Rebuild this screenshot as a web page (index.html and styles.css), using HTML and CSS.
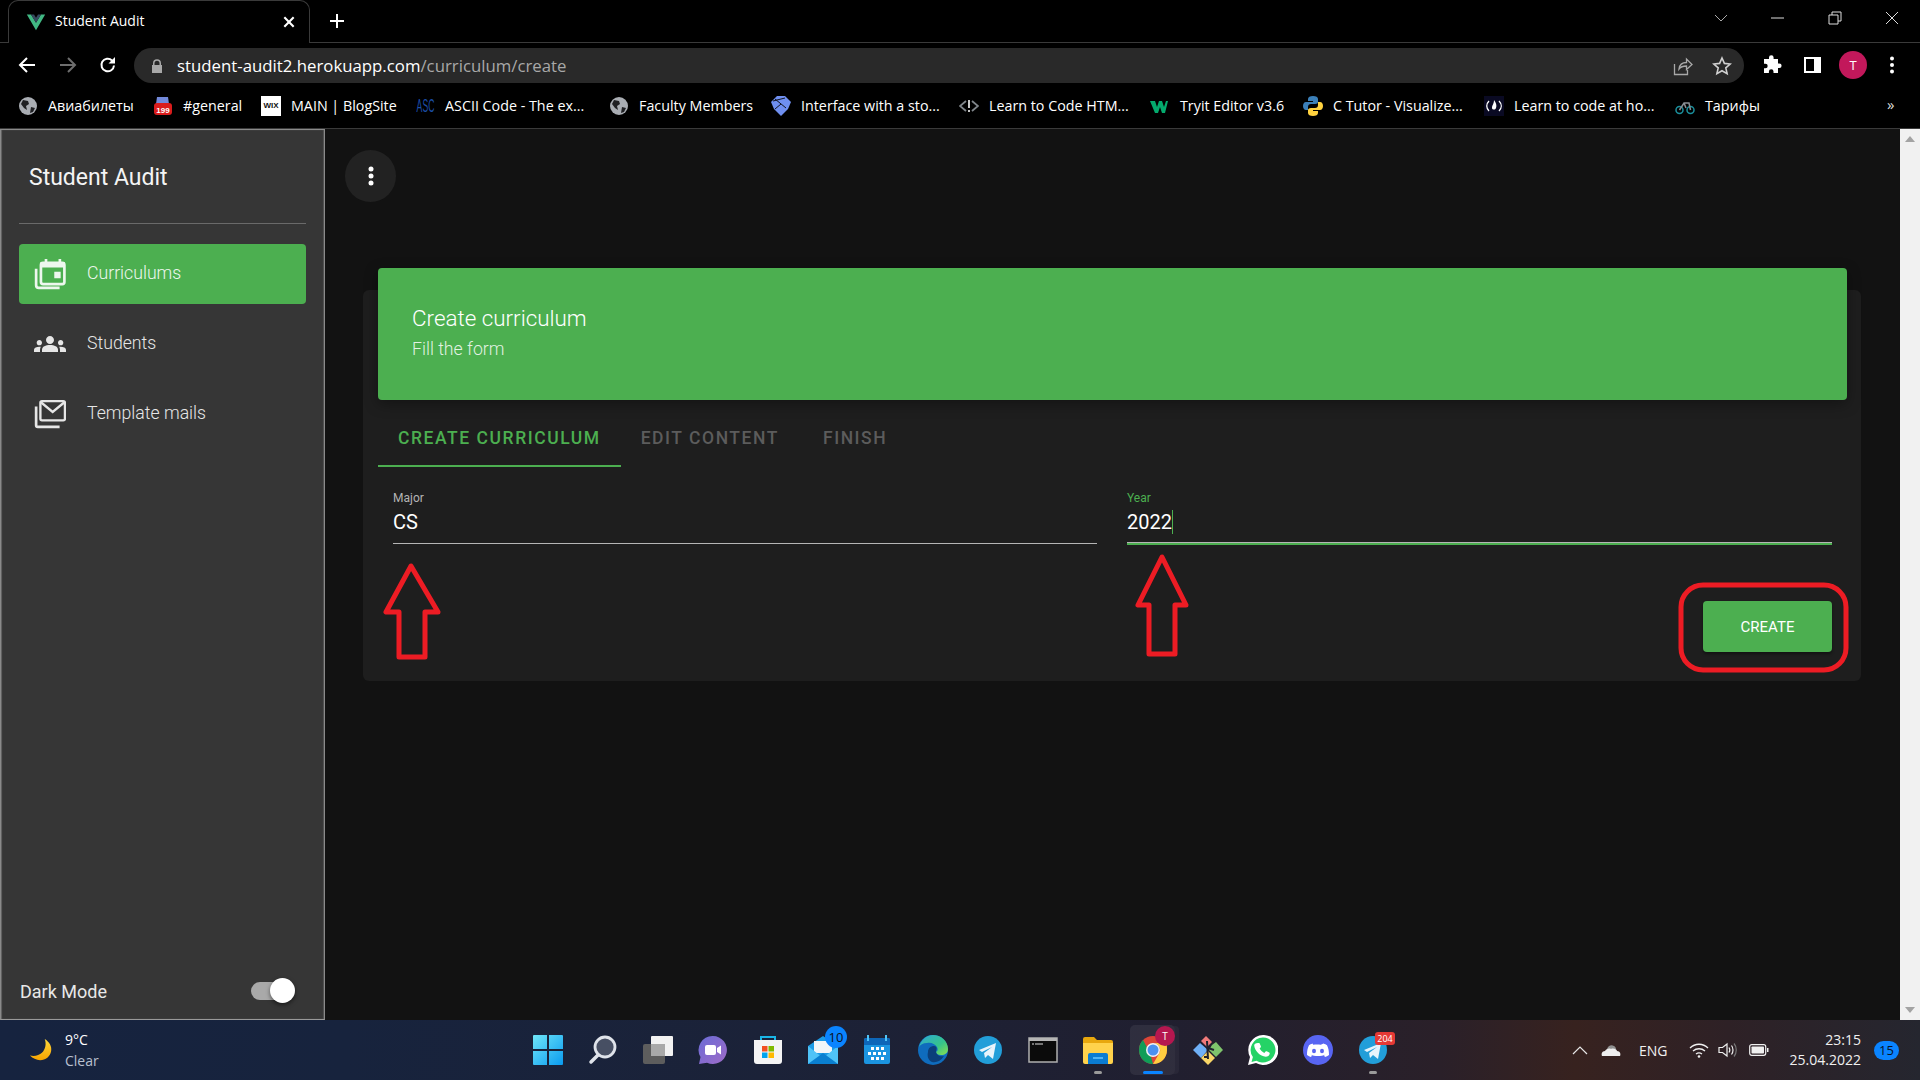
FILE: index.html
```html
<!DOCTYPE html>
<html lang="en">
<head>
<meta charset="utf-8">
<title>Student Audit</title>
<link rel="stylesheet" href="styles.css">
</head>
<body>
<div class="page">
  <header class="tabbar">
    <div class="tab">
      <svg class="tab-logo" viewBox="0 0 24 24"><path fill="#41b883" d="M1 3h5l6 10L18 3h5L12 22z"/><path fill="#35495e" d="M6 3h3.600L12 7l2.400-4H18l-6 10z"/></svg>
      <span class="tab-title">Student Audit</span>
      <svg class="tab-close" viewBox="0 0 12 12"><path d="M2 2l8 8M10 2l-8 8" stroke="#fff" stroke-width="1.800"/></svg>
    </div>
    <svg class="tab-new" viewBox="0 0 16 16"><path d="M8 1v14M1 8h14" stroke="#fff" stroke-width="2"/></svg>
    <div class="winctl">
      <svg class="win-ico win-chev" viewBox="0 0 14 14"><path d="M1 4l6 6 6-6" fill="none" stroke="#aaa"/></svg>
      <svg class="win-ico" viewBox="0 0 14 14"><path d="M0 7h13" stroke="#ddd"/></svg>
      <svg class="win-ico" viewBox="0 0 14 14"><path d="M1 4h9v9H1zM4 4V1h9v9h-3" fill="none" stroke="#ddd"/></svg>
      <svg class="win-ico" viewBox="0 0 14 14"><path d="M1 1l12 12M13 1L1 13" stroke="#ddd"/></svg>
    </div>
  </header>

  <div class="toolbar">
    <svg class="nav nav-back" viewBox="0 0 18 18"><path d="M17 9H2M9 2L2 9l7 7" fill="none" stroke="#fff" stroke-width="2"/></svg>
    <svg class="nav nav-fwd" viewBox="0 0 18 18"><path d="M1 9h15M9 2l7 7-7 7" fill="none" stroke="#6e6e6e" stroke-width="2"/></svg>
    <svg class="nav nav-reload" viewBox="0 0 18 18"><path d="M15 9.500A6.300 6.300 0 1 1 13 4.400" fill="none" stroke="#fff" stroke-width="2"/><path d="M16 1v6.500H9.500z" fill="#fff"/></svg>
    <div class="omnibox">
      <svg class="lock" viewBox="0 0 12 14"><path fill="#a8a8a8" d="M2 6V4.200a4 4 0 0 1 8 0V6h1v8H1V6zm1.500 0h5V4.200a2.500 2.500 0 0 0-5 0z"/></svg>
      <span class="url"><span class="url-host">student-audit2.herokuapp.com</span>/curriculum/create</span>
      <svg class="omni-ico omni-share" viewBox="0 0 20 20"><path d="M1.500 8v10.500h13V14M6 13c.5-4 3.500-6.500 7.500-6.500V3l5.500 5.500-5.500 5V10C10 10 7.500 11 6 13z" fill="none" stroke="#a8a8a8" stroke-width="1.300"/></svg>
      <svg class="omni-ico omni-star" viewBox="0 0 20 20"><path d="M10 2l2.400 5.400 5.800.6-4.400 3.900 1.300 5.700L10 14.700l-5.100 2.900 1.300-5.700L1.800 8l5.800-.6z" fill="none" stroke="#d0d0d0" stroke-width="1.600"/></svg>
    </div>
    <svg class="tool tool-ext" viewBox="0 0 20 20"><path fill="#fff" d="M7 2.500a2.300 2.300 0 0 1 4.600 0V4h4.400v4.500h1.300a2.300 2.300 0 0 1 0 4.600H16V18h-4.500v-1.500a2.300 2.300 0 0 0-4.600 0V18H2v-4.700h1.400a2.300 2.300 0 0 0 0-4.600H2V4h5z"/></svg>
    <svg class="tool tool-panel" viewBox="0 0 20 20"><path fill="#fff" fill-rule="evenodd" d="M2 2h17v16H2zM4 4v12h8V4z"/></svg>
    <div class="avatar">T</div>
    <svg class="tool tool-kebab" viewBox="0 0 6 20"><circle cx="3" cy="3.500" r="2" fill="#fff"/><circle cx="3" cy="10" r="2" fill="#fff"/><circle cx="3" cy="16.500" r="2" fill="#fff"/></svg>
  </div>

  <nav class="bookmarks">
    <a class="bm"><svg class="bm-ico" viewBox="0 0 20 20"><circle cx="10" cy="10" r="9" fill="#a9adb3"/><path fill="#202124" d="M5 4l5 1 1 3-3 2 1 4-3-2-3-4zM13 11l4 1-2 4-3 1z"/></svg><span>Авиабилеты</span></a>
    <a class="bm"><svg class="bm-ico" viewBox="0 0 20 20"><path fill="#7289da" d="M4 1h11l1 7H3z"/><rect x="1" y="7" width="18" height="12" rx="3" fill="#d91c1c"/><text x="10" y="17" class="bm-count">199</text></svg><span>#general</span></a>
    <a class="bm"><span class="wix">WIX</span><span>MAIN | BlogSite</span></a>
    <a class="bm"><span class="asc"><span class="asc-text">ASC</span></span><span>ASCII Code - The ex...</span></a>
    <a class="bm"><svg class="bm-ico" viewBox="0 0 20 20"><circle cx="10" cy="10" r="9" fill="#a9adb3"/><path fill="#202124" d="M5 4l5 1 1 3-3 2 1 4-3-2-3-4zM13 11l4 1-2 4-3 1z"/></svg><span>Faculty Members</span></a>
    <a class="bm"><svg class="bm-ico" viewBox="0 0 20 20"><path fill="#6f8ff0" d="M6 0h8l6 6-3 7-7 7-7-7-3-7z"/><path d="M2 5l12-3M4 3l11 9M10 8l-6 5" fill="none" stroke="#10131f" stroke-width="1"/></svg><span>Interface with a sto...</span></a>
    <a class="bm"><svg class="bm-ico" viewBox="0 0 20 20"><path d="M7 5l-6 5 6 5M13 5l6 5-6 5" fill="none" stroke="#80868b" stroke-width="1.800"/><path d="M10 4v8M10 14v2" stroke="#c8c8c8" stroke-width="2"/></svg><span>Learn to Code HTM...</span></a>
    <a class="bm"><svg class="bm-ico" viewBox="0 0 20 20"><path fill="#04aa6d" d="M0 5h5l2 6 2-6h3l2 6 2-6h2l-3 12h-3l-2-6-2 6H5z"/></svg><span>Tryit Editor v3.6</span></a>
    <a class="bm"><svg class="bm-ico" viewBox="0 0 20 20"><path fill="#3b7fb8" d="M10 0c-3 0-5 1-5 3v2h5v1H3c-2 0-3 2-3 4s1 4 3 4h2v-3c0-2 1-3 3-3h4c2 0 3-1 3-2V3c0-2-2-3-5-3z"/><path fill="#ffd23f" d="M10 20c3 0 5-1 5-3v-2h-5v-1h7c2 0 3-2 3-4s-1-4-3-4h-2v3c0 2-1 3-3 3H8c-2 0-3 1-3 2v3c0 2 2 3 5 3z"/></svg><span>C Tutor - Visualize...</span></a>
    <a class="bm"><svg class="bm-ico" viewBox="0 0 20 20"><rect width="20" height="20" fill="#0a0a23"/><path d="M5 5c-3 3-3 7 0 10M15 5c3 3 3 7 0 10" fill="none" stroke="#fff" stroke-width="1.300"/><path fill="#fff" d="M10 4c2 3 3 5 2 8-.5 1-1 1.500-2 1.500S8 13 8 12c0-3 2-4 2-8z"/></svg><span>Learn to code at ho...</span></a>
    <a class="bm"><svg class="bm-ico" viewBox="0 0 20 20"><circle cx="4.500" cy="14" r="3.500" fill="none" stroke="#1a8f9c" stroke-width="1.500"/><circle cx="15.500" cy="14" r="3.500" fill="none" stroke="#1a8f9c" stroke-width="1.500"/><path d="M4.500 14L9 7h5l1.500 7M9 7l2 5" fill="none" stroke="#8a8f94" stroke-width="1.500"/></svg><span>Тарифы</span></a>
    <span class="bm-more">»</span>
  </nav>

  <div class="app">
    <aside class="sidebar">
      <div class="brand">Student Audit</div>
      <ul class="menu">
        <li class="menu-item is-active">
          <svg class="menu-ico" viewBox="0 0 30 30"><rect x="6.500" y="4.500" width="22" height="20" rx="2" fill="none" stroke="currentColor" stroke-width="2.500"/><path fill="currentColor" d="M6 4h23v5H6zM10 1h2.500v4H10zM23 1h2.500v4H23zM19 13h6v6h-6z"/><path d="M2 10v15.500A2.500 2.500 0 0 0 4.500 28H24" fill="none" stroke="currentColor" stroke-width="2.500"/></svg>
          <span>Curriculums</span>
        </li>
        <li class="menu-item">
          <svg class="menu-ico" viewBox="0 0 24 24"><path fill="currentColor" d="M12 12.750c1.630 0 3.070.390 4.240.900 1.080.480 1.760 1.560 1.760 2.730V18H6v-1.610c0-1.180.680-2.260 1.760-2.730 1.170-.520 2.610-.910 4.240-.910zM4 13c1.100 0 2-.900 2-2s-.900-2-2-2-2 .900-2 2 .900 2 2 2zm1.130 1.100c-.370-.060-.740-.100-1.130-.100-.990 0-1.930.210-2.780.580C.480 14.900 0 15.620 0 16.430V18h4.500v-1.610c0-.830.230-1.610.630-2.290zM20 13c1.100 0 2-.900 2-2s-.900-2-2-2-2 .900-2 2 .900 2 2 2zm4 3.430c0-.810-.480-1.530-1.220-1.850-.850-.370-1.790-.580-2.780-.580-.390 0-.760.040-1.130.100.400.680.630 1.460.630 2.290V18H24v-1.570zM12 6c1.660 0 3 1.340 3 3s-1.340 3-3 3-3-1.340-3-3 1.340-3 3-3z"/></svg>
          <span>Students</span>
        </li>
        <li class="menu-item">
          <svg class="menu-ico" viewBox="0 0 30 30"><rect x="6" y="3" width="23" height="18" rx="1.500" fill="none" stroke="currentColor" stroke-width="2.200"/><path d="M6.500 4l11 9 11-9" fill="none" stroke="currentColor" stroke-width="2.200"/><path d="M2 8v17.500c0 .800.700 1.500 1.500 1.500H24" fill="none" stroke="currentColor" stroke-width="2.500"/></svg>
          <span>Template mails</span>
        </li>
      </ul>
      <div class="dark-mode">
        <span class="dark-label">Dark Mode</span>
        <span class="switch"><span class="switch-knob"></span></span>
      </div>
    </aside>

    <main class="content">
      <button class="fab"><svg class="fab-ico" viewBox="0 0 6 20"><circle cx="3" cy="3" r="2.500" fill="#fff"/><circle cx="3" cy="10" r="2.500" fill="#fff"/><circle cx="3" cy="17" r="2.500" fill="#fff"/></svg></button>
      <section class="card">
        <div class="card-head">
          <h1 class="card-title">Create curriculum</h1>
          <p class="card-sub">Fill the form</p>
        </div>
        <div class="steps">
          <div class="step is-current">Create curriculum</div>
          <div class="step">Edit content</div>
          <div class="step step-last">Finish</div>
        </div>
        <div class="fields">
          <label class="field">
            <span class="field-label">Major</span>
            <span class="field-value">CS</span>
          </label>
          <label class="field is-focus">
            <span class="field-label">Year</span>
            <span class="field-value">2022<i class="caret"></i></span>
          </label>
        </div>
        <div class="actions"><button class="create">Create</button></div>
      </section>
    </main>

    <div class="scrollbar">
      <svg class="sb-arrow" viewBox="0 0 10 6"><path d="M5 0l5 6H0z" fill="#a3a3a3"/></svg>
      <svg class="sb-arrow" viewBox="0 0 10 6"><path d="M5 6L0 0h10z" fill="#a3a3a3"/></svg>
    </div>
  </div>

  <footer class="taskbar">
    <div class="weather">
      <svg class="moon" viewBox="0 0 26 26"><defs><linearGradient id="mg" x1="0" y1="0" x2="0" y2="1"><stop offset="0" stop-color="#ffd83a"/><stop offset="1" stop-color="#f7a400"/></linearGradient></defs><path fill="url(#mg)" d="M17 1c5 3 8 8 7 13-1 6-6 10-12 10-4 0-8-2-11-5 5 1 10 0 13-3 4-4 5-10 3-15z"/></svg>
      <div class="weather-text"><div class="temp">9°C</div><div class="cond">Clear</div></div>
    </div>
    <div class="apps">
      <div class="app-ico"><svg class="tb" viewBox="0 0 30 30"><defs><linearGradient id="wg" x1="0" y1="0" x2="1" y2="1"><stop offset="0" stop-color="#6fe6f8"/><stop offset="1" stop-color="#0a9bf0"/></linearGradient></defs><path fill="url(#wg)" d="M0 1a1 1 0 0 1 1-1h13v14H0zM16 0h13a1 1 0 0 1 1 1v13H16zM0 16h14v14H1a1 1 0 0 1-1-1zM16 16h14v13a1 1 0 0 1-1 1H16z"/></svg></div>
      <div class="app-ico"><svg class="tb" viewBox="0 0 30 30"><circle cx="17" cy="12" r="10" fill="#474f63" stroke="#dfe3ea" stroke-width="2.800"/><path d="M10 20l-7 7" stroke="#dfe3ea" stroke-width="3.500" stroke-linecap="round"/></svg></div>
      <div class="app-ico"><svg class="tb" viewBox="0 0 30 30"><rect x="0" y="9" width="22" height="20" rx="2" fill="#5d5d5d"/><rect x="8" y="1" width="22" height="20" rx="1" fill="#f2f2f2"/><rect x="8" y="9" width="14" height="12" fill="#a9a9a9"/></svg></div>
      <div class="app-ico"><svg class="tb" viewBox="0 0 30 30"><defs><linearGradient id="tg" x1="0" y1="0" x2="1" y2="1"><stop offset="0" stop-color="#6a6cd6"/><stop offset="1" stop-color="#9f6bc8"/></linearGradient></defs><path fill="url(#tg)" d="M15 1a14 14 0 1 1-6 26.700L1 29l1.500-7A14 14 0 0 1 15 1z"/><rect x="7" y="10" width="11" height="10" rx="2" fill="#fff"/><path fill="#fff" d="M19 13l4-2.500v9L19 17z"/></svg></div>
      <div class="app-ico"><svg class="tb" viewBox="0 0 30 30"><path d="M8 6V2h14v4" fill="none" stroke="#19b5e6" stroke-width="2"/><path fill="#f4f4f4" d="M1 5h28v21a3 3 0 0 1-3 3H4a3 3 0 0 1-3-3z"/><path fill="#f25022" d="M9 11h5.500v5.500H9z"/><path fill="#7fba00" d="M15.500 11H21v5.500h-5.500z"/><path fill="#00a4ef" d="M9 17.500h5.500V23H9z"/><path fill="#ffb900" d="M15.500 17.500H21V23h-5.500z"/></svg></div>
      <div class="app-ico has-badge"><svg class="tb" viewBox="0 0 30 30"><path fill="#1c9be6" d="M0 11L15 1l15 10v18H0z"/><path fill="#f1f5f8" d="M6 6h18v12H6z"/><path fill="#4fc3f7" d="M0 11l15 12 15-12v18H0z"/><path fill="#0a7fd0" d="M0 29l15-11 15 11z"/></svg><span class="badge badge-mail">10</span></div>
      <div class="app-ico"><svg class="tb" viewBox="0 0 30 30"><rect x="1" y="3" width="26" height="26" rx="2" fill="#1b94e0"/><path fill="#0d66b8" d="M1 5a2 2 0 0 1 2-2h22a2 2 0 0 1 2 2v5H1z"/><path fill="#4fc3f7" d="M4 0h2v6H4zM22 0h2v6h-2z"/><path fill="#fff" d="M8 12h3v3H8zM13 12h3v3h-3zM18 12h3v3h-3zM5 17h3v3H5zM10 17h3v3h-3zM15 17h3v3h-3zM20 17h3v3h-3zM8 22h3v3H8zM13 22h3v3h-3zM18 22h3v3h-3z"/></svg></div>
      <div class="app-ico"><svg class="tb" viewBox="0 0 30 30"><defs><linearGradient id="eg" x1="0" y1="0" x2="1" y2="1"><stop offset="0" stop-color="#2fa7d8"/><stop offset=".6" stop-color="#35c58a"/><stop offset="1" stop-color="#8be04e"/></linearGradient></defs><circle cx="15" cy="15" r="15" fill="#0f6cbd"/><path fill="url(#eg)" d="M1 12C3 5 8 0 15 0c8 0 15 6 15 14 0 4-3 6-7 6-3 0-5-1-5-3 2-1 2-3 1-5-2-3-6-5-10-4-4 0-7 2-8 4z"/><path fill="#0b3f7a" d="M10 17c0-4 3-6 6-6s3 3 2 5c0 4 4 6 8 5-3 5-8 7-12 6-4-2-5-6-4-10z"/></svg></div>
      <div class="app-ico"><svg class="tb" viewBox="0 0 30 30"><circle cx="15" cy="15" r="14" fill="#229ed9"/><path fill="#e8f4fb" d="M6 15l17-7-3 16-5-4-3 3-1-5 8-6-10 5z"/></svg></div>
      <div class="app-ico"><svg class="tb" viewBox="0 0 30 30"><rect x="1" y="3" width="28" height="24" fill="#0b0b0b" stroke="#b0b0b0" stroke-width="1.500"/><rect x="1" y="3" width="28" height="3" fill="#b5b5b5"/><path d="M4 9h2M7 9h8" stroke="#ddd"/></svg></div>
      <div class="app-ico"><svg class="tb" viewBox="0 0 30 30"><path fill="#e8a70d" d="M0 4a2 2 0 0 1 2-2h9l3 3h14a2 2 0 0 1 2 2v4H0z"/><path fill="#ffd24c" d="M0 8h30v19a2 2 0 0 1-2 2H2a2 2 0 0 1-2-2z"/><path fill="#0b7cd2" d="M5 20a2 2 0 0 1 2-2h16a2 2 0 0 1 2 2v9H5z"/><path fill="#4fb4f5" d="M10 22h10v2H10z"/></svg><i class="run-dot"></i></div>
      <div class="app-ico is-running"><svg class="tb" viewBox="0 0 30 30"><circle cx="15" cy="15" r="14" fill="#db4437"/><path fill="#0f9d58" d="M1 15C1 10 3 7 5 5l7 13 3 11C7 29 1 23 1 15z"/><path fill="#ffcd40" d="M15 8h13.500c.400 2 .500 4 .500 7 0 8-6 14-14 14l7-12c1-4-2-9-7-9z"/><circle cx="15" cy="15" r="7" fill="#f1f3f4"/><circle cx="15" cy="15" r="5.500" fill="#4a90f0"/></svg><span class="badge badge-chrome">T</span></div>
      <div class="app-ico"><svg class="tb" viewBox="0 0 30 30"><path fill="#6fb0f7" d="M0 15l7-7 8 7-7 8z"/><path fill="#f07a7a" d="M8 6l5-5 6 6-5 5z"/><path fill="#7fc46c" d="M19 10l4-3 7 8-7 7-7-7z"/><path fill="#f9d667" d="M8 23l7-7 7 7-7 7z"/><path d="M14 6l1 18M15 13l6 2M15 22l-4 0" stroke="#20222e" stroke-width="2" fill="none"/></svg></div>
      <div class="app-ico"><svg class="tb" viewBox="0 0 30 30"><path fill="#fff" d="M15 0a15 15 0 1 1-7 28L0 30l2-8A15 15 0 0 1 15 0z"/><path fill="#25d366" d="M15 2.500a12.500 12.500 0 1 1-6.500 23.200L3.500 27l1.400-4.900A12.500 12.500 0 0 1 15 2.500z"/><path fill="#fff" d="M10.500 8c.500 0 1 0 1.300.800l1.100 2.500c.100.400 0 .800-.300 1.100l-1 1.200c1 1.900 2.600 3.400 4.700 4.400l1.300-1.500c.300-.300.700-.400 1.100-.200l2.500 1.200c.500.300.600.700.500 1.300-.300 1.700-2 3-4 3-5.500-.300-11-6-11.500-11.200 0-1.500 1.300-2.600 3.800-2.600z"/></svg></div>
      <div class="app-ico"><svg class="tb" viewBox="0 0 30 30"><circle cx="15" cy="15" r="15" fill="#5865f2"/><path fill="#fff" d="M20.500 8.500c1.500.500 2.500 1 3.500 1.800 1.500 3 2 6 2 9.700-1.300 1-2.700 1.600-4 2l-1-1.600c.6-.2 1.100-.5 1.600-.8-4.500 2-10.700 2-15.200 0 .5.300 1 .6 1.600.8l-1 1.600c-1.300-.4-2.700-1-4-2 0-3.700.5-6.700 2-9.700 1-.800 2-1.300 3.500-1.800l.7 1.300c2.500-.4 5.100-.4 7.600 0z"/><ellipse cx="11" cy="16" rx="2" ry="2.300" fill="#5865f2"/><ellipse cx="19" cy="16" rx="2" ry="2.300" fill="#5865f2"/></svg></div>
      <div class="app-ico has-badge"><svg class="tb" viewBox="0 0 30 30"><circle cx="15" cy="15" r="14" fill="#229ed9"/><path fill="#e8f4fb" d="M6 15l17-7-3 16-5-4-3 3-1-5 8-6-10 5z"/></svg><span class="badge badge-tg">204</span><i class="run-dot"></i></div>
    </div>
    <div class="tray">
      <svg class="tray-chev" viewBox="0 0 16 10"><path d="M1 9l7-7 7 7" fill="none" stroke="#e6e6e6" stroke-width="1.200"/></svg>
      <svg class="tray-cloud" viewBox="0 0 20 12"><path fill="#8f8f8f" d="M6 5c1-3 4-5 7-3 1 .500 2 1.500 2 3l-4 3z"/><path fill="#eee" d="M1 12c-1-2 0-5 3-5 1-2 4-3 6-2 2-1 6 0 6 2 3 0 4 3 3 5z"/></svg>
      <span class="lang">ENG</span>
      <svg class="tray-wifi" viewBox="0 0 20 16"><path d="M1 6c5-5 13-5 18 0M4 9c3.500-3 8.500-3 12 0M7 12c2-1.500 4-1.500 6 0" fill="none" stroke="#f0f0f0" stroke-width="1.300"/><circle cx="10" cy="14.500" r="1.300" fill="#f0f0f0"/></svg>
      <svg class="tray-vol" viewBox="0 0 20 16"><path d="M1 5.500h3.500L9 2v12L4.500 10.500H1z" fill="none" stroke="#f0f0f0" stroke-width="1.200"/><path d="M11 5.500c1 1.500 1 3.500 0 5M13.500 3.500c2 2.500 2 6.500 0 9" fill="none" stroke="#f0f0f0" stroke-width="1.200"/><path d="M16 1.500c3 3.500 3 9.500 0 13" fill="none" stroke="#777" stroke-width="1.200"/></svg>
      <svg class="tray-bat" viewBox="0 0 20 12"><rect x=".7" y=".7" width="16" height="10.600" rx="2" fill="none" stroke="#f0f0f0" stroke-width="1.200"/><rect x="2.500" y="2.500" width="12.500" height="7" rx=".8" fill="#f0f0f0"/><rect x="18" y="4" width="1.500" height="4" fill="#f0f0f0"/></svg>
      <div class="clock"><div>23:15</div><div>25.04.2022</div></div>
      <span class="notif">15</span>
    </div>
  </footer>

  <svg class="marks" viewBox="0 0 1920 1080">
    <polygon class="mark" points="411,566 386,612 399,612 399,657 425,657 425,612 438,612"/>
    <polygon class="mark" points="1162,557 1138,605 1149,605 1149,654 1175,654 1175,605 1186,605"/>
    <rect class="mark" x="1681" y="585" width="165" height="85" rx="22"/>
  </svg>
</div>
</body>
</html>
```

FILE: styles.css
```css
* { box-sizing: border-box; }
html, body { margin: 0; height: 100%; background: #000; }
body { overflow: hidden; }
.page {
  position: relative;
  width: 1920px;
  height: 1080px;
  display: flex;
  flex-direction: column;
  font-family: "Open Sans", "Noto Sans", sans-serif;
  color: #fff;
}

/* browser chrome */
.tabbar {
  height: 43px;
  flex: none;
  display: flex;
  align-items: stretch;
  background: #000;
  border-bottom: 1px solid #3a3a3a;
}
.tab {
  width: 302px;
  height: 43px;
  margin-left: 8px;
  display: flex;
  align-items: center;
  padding: 0 13px 0 16px;
  background: #000;
  border: 1px solid #3a3a3a;
  border-bottom: none;
  border-radius: 10px 10px 0 0;
}
.tab-logo { width: 22px; height: 20px; flex: none; }
.tab-title { margin-left: 8px; padding-bottom: 3px; font-size: 14px; flex: 1; }
.tab-close { width: 14px; height: 14px; flex: none; }
.tab-new { width: 16px; height: 16px; margin: 13px 0 0 19px; flex: none; }
.winctl { margin-left: auto; display: flex; align-items: flex-start; padding: 11px 21px 0 0; gap: 43px; }
.win-ico { width: 14px; height: 14px; flex: none; }

.toolbar {
  height: 42px;
  flex: none;
  display: flex;
  align-items: center;
  padding-top: 1px;
  background: #000;
}
.nav { width: 18px; height: 18px; flex: none; }
.nav-back { margin-left: 18px; }
.nav-fwd { margin-left: 23px; }
.nav-reload { margin-left: 22px; }
.omnibox {
  width: 1610px;
  height: 35px;
  margin: 2px 0 0 17px;
  display: flex;
  align-items: center;
  background: #292929;
  border-radius: 18px;
  padding: 0 12px 0 17px;
}
.lock { width: 12px; height: 14px; flex: none; }
.url { margin-left: 14px; font-size: 16.800px; color: #a8a8a8; flex: 1; white-space: nowrap; }
.url-host { color: #fff; }
.omni-ico { width: 20px; height: 20px; flex: none; }
.omni-star { margin-left: 19px; }
.tool { flex: none; }
.tool-ext { width: 20px; height: 20px; margin-left: 18px; }
.tool-panel { width: 20px; height: 20px; margin-left: 20px; }
.avatar {
  width: 28px;
  height: 28px;
  margin-left: 17px;
  flex: none;
  border-radius: 50%;
  background: #c2185b;
  font-size: 13px;
  line-height: 28px;
  text-align: center;
}
.tool-kebab { width: 6px; height: 20px; margin-left: 22px; }

.bookmarks {
  height: 44px;
  flex: none;
  display: grid;
  grid-template-columns: 135px 108px 154px 194px 162px 188px 191px 153px 181px 191px 212px 20px;
  align-items: center;
  padding: 0 0 2px 18px;
  background: #000;
  border-bottom: 1px solid #3a3a3a;
  font-size: 14.300px;
  white-space: nowrap;
}
.bm { display: flex; align-items: center; gap: 10px; overflow: hidden; }
.bm-ico { width: 20px; height: 20px; flex: none; }
.bm-count { font: 700 8px "Liberation Sans", sans-serif; fill: #fff; text-anchor: middle; }
.wix {
  width: 20px;
  height: 20px;
  flex: none;
  background: #fff;
  color: #111;
  font: 700 8px/20px "Liberation Sans", sans-serif;
  text-align: center;
}
.asc {
  width: 20px;
  height: 20px;
  flex: none;
  display: flex;
  justify-content: center;
  color: #1c4fa8;
  font: 400 18px/20px "Liberation Sans", sans-serif;
}
.asc-text { transform: scaleX(.48); }
.bm-more { font-size: 15px; color: #ddd; margin-top: -4px; }

/* application */
.app {
  flex: 1;
  min-height: 0;
  display: flex;
  background: #121212;
  font-family: Roboto, sans-serif;
}
.sidebar {
  width: 325px;
  flex: none;
  display: flex;
  flex-direction: column;
  background: #363636;
  border: 1px solid #8a8a8a;
  border-bottom-color: #999;
  padding: 0 18px 0 18px;
  box-shadow: inset 1px 0 1px #666, inset -1px 0 1px #555;
}
.brand {
  height: 94px;
  padding: 27px 0 0 10px;
  font-size: 23px;
  line-height: 42px;
  font-weight: 400;
  color: #f4f4f4;
  border-bottom: 1px solid #6a6a6a;
}
.menu { list-style: none; margin: 20px 0 0; padding: 0; display: flex; flex-direction: column; gap: 10px; }
.menu-item {
  height: 60px;
  display: flex;
  align-items: center;
  padding-left: 15px;
  gap: 21px;
  border-radius: 4px;
  font-size: 17.700px;
  font-weight: 300;
  color: #e6e6e6;
}
.menu-item span { padding-bottom: 2px; }
.menu-item.is-active { background: #4caf50; color: #edf7ee; }
.menu-ico { width: 32px; height: 32px; flex: none; }
.dark-mode {
  margin-top: auto;
  height: 60px;
  display: flex;
  align-items: center;
  padding-top: 4px;
}
.dark-label { font-size: 18px; font-weight: 400; color: #e8e8e8; margin-left: 1px; }
.switch {
  position: relative;
  width: 40px;
  height: 18px;
  margin-left: auto;
  margin-right: 15px;
  background: #a9a9a9;
  border-radius: 9px;
}
.switch-knob {
  position: absolute;
  right: -4px;
  top: -4px;
  width: 25px;
  height: 25px;
  border-radius: 50%;
  background: #fff;
  box-shadow: 0 2px 4px rgba(0,0,0,.5);
}

.content { flex: 1; min-width: 0; padding: 21px 39px 0 38px; }
.fab {
  display: flex;
  align-items: center;
  justify-content: center;
  width: 51px;
  height: 52px;
  margin-left: -18px;
  padding: 0;
  border: none;
  border-radius: 50%;
  background: #222;
}
.fab-ico { width: 6px; height: 20px; }
.card {
  display: flow-root;
  margin-top: 88px;
  padding: 0 14px 30px 15px;
  background: #1e1e1e;
  border-radius: 6px;
  height: 391px;
}
.card-head {
  height: 132px;
  margin-top: -22px;
  padding: 33px 34px 0;
  background: #4caf50;
  border-radius: 4px;
  box-shadow: 0 4px 14px rgba(0,0,0,.35);
}
.card-title { margin: 0; font-size: 22.400px; line-height: 34px; font-weight: 300; color: #fff; }
.card-sub { margin: 0; font-size: 17.700px; line-height: 28px; font-weight: 300; color: rgba(255,255,255,.85); }
.steps { display: flex; height: 67px; }
.step {
  height: 67px;
  padding: 0 20px;
  line-height: 76px;
  font-size: 17.500px;
  font-weight: 500;
  letter-spacing: 1.550px;
  text-transform: uppercase;
  color: #5c5c5c;
  white-space: nowrap;
}
.step.is-current { color: #4caf50; border-bottom: 2px solid #4caf50; }
.step-last { margin-left: 4px; }
.fields {
  display: grid;
  grid-template-columns: 704px 705px;
  gap: 30px;
  padding: 23px 0 0 15px;
}
.field { display: block; height: 54px; border-bottom: 1px solid #b5b5b5; }
.field-label { display: block; font-size: 12px; line-height: 17px; color: #b4b4b4; }
.field-value { display: block; position: relative; font-size: 20px; line-height: 30px; color: #fff; }
.field.is-focus { border-bottom: 2px solid #4caf50; box-shadow: inset 0 -1px 0 #b5b5b5; height: 55px; }
.is-focus .field-label { color: #4caf50; }
.caret { display: inline-block; width: 1px; height: 24px; background: #4caf50; vertical-align: -5px; }
.actions { display: flex; justify-content: flex-end; padding: 56px 15px 0 0; }
.create {
  width: 129px;
  height: 51px;
  border: none;
  border-radius: 4px;
  background: #4caf50;
  color: #fff;
  font: 400 15px Roboto, sans-serif;
  text-transform: uppercase;
  box-shadow: 0 2px 3px rgba(0,0,0,.4);
}
.scrollbar {
  width: 20px;
  flex: none;
  display: flex;
  flex-direction: column;
  justify-content: space-between;
  align-items: center;
  padding: 7px 0;
  background: #f1f1f1;
}
.sb-arrow { width: 10px; height: 6px; }

/* taskbar */
.taskbar {
  height: 60px;
  flex: none;
  display: flex;
  align-items: center;
  background: linear-gradient(90deg, #16233f 0%, #17233d 18%, #1b2238 40%, #201f30 60%, #2a2029 75%, #37221f 82%, #2e2126 90%, #25262f 100%);
}
.weather { width: 520px; flex: none; display: flex; align-items: center; padding-left: 29px; }
.moon { width: 24px; height: 24px; flex: none; }
.weather-text { margin-left: 12px; font-size: 14px; line-height: 21px; }
.temp { color: #fff; }
.cond { color: #b9c0cf; }
.apps { display: flex; flex: none; }
.app-ico {
  position: relative;
  width: 55px;
  height: 50px;
  display: flex;
  align-items: center;
  justify-content: center;
}
.tb { width: 30px; height: 30px; }
.is-running { background: rgba(255,255,255,.07); border-radius: 5px; box-shadow: 5px 0 0 -1px rgba(255,255,255,.04); width: 45px; margin: 0 5px; }
.is-running::after {
  content: "";
  position: absolute;
  left: 13px;
  bottom: 1px;
  width: 20px;
  height: 3px;
  border-radius: 2px;
  background: #0a84ff;
}
.run-dot {
  position: absolute;
  left: 24px;
  bottom: 1px;
  width: 8px;
  height: 3px;
  border-radius: 2px;
  background: #9a9a9a;
}
.badge { position: absolute; color: #fff; text-align: center; }
.badge-mail {
  top: 1px;
  left: 30px;
  width: 22px;
  height: 22px;
  border-radius: 50%;
  background: #0a84ff;
  color: #0a1020;
  font-size: 13px;
  line-height: 22px;
}
.badge-chrome {
  top: 1px;
  left: 25px;
  width: 20px;
  height: 20px;
  border-radius: 50%;
  background: #b5174f;
  font-size: 10px;
  line-height: 20px;
}
.badge-tg {
  top: 7px;
  left: 30px;
  width: 20px;
  height: 13px;
  border-radius: 3px;
  background: #e53935;
  font-size: 9px;
  line-height: 13px;
}
.tray { flex: 1; height: 60px; display: flex; align-items: center; padding-left: 172px; color: #f0f0f0; }
.tray-chev { width: 16px; height: 10px; flex: none; }
.tray-cloud { width: 20px; height: 12px; margin-left: 13px; flex: none; }
.lang { margin-left: 18px; font-size: 14px; width: 29px; flex: none; }
.tray-wifi { width: 20px; height: 16px; margin-left: 21px; flex: none; }
.tray-vol { width: 20px; height: 16px; margin-left: 9px; flex: none; }
.tray-bat { width: 20px; height: 12px; margin-left: 11px; flex: none; }
.clock { margin-left: auto; text-align: right; font-size: 14px; line-height: 20px; }
.notif {
  width: 25px;
  height: 19px;
  margin: 0 21px 0 13px;
  border-radius: 10px;
  background: #0a84ff;
  color: #08121f;
  font-size: 13px;
  line-height: 19px;
  text-align: center;
  flex: none;
}

/* hand-drawn annotations lying over the page */
.marks { position: absolute; left: 0; top: 0; width: 1920px; height: 1080px; pointer-events: none; }
.mark { fill: none; stroke: #ed1c24; stroke-width: 5; stroke-linejoin: round; }
```
